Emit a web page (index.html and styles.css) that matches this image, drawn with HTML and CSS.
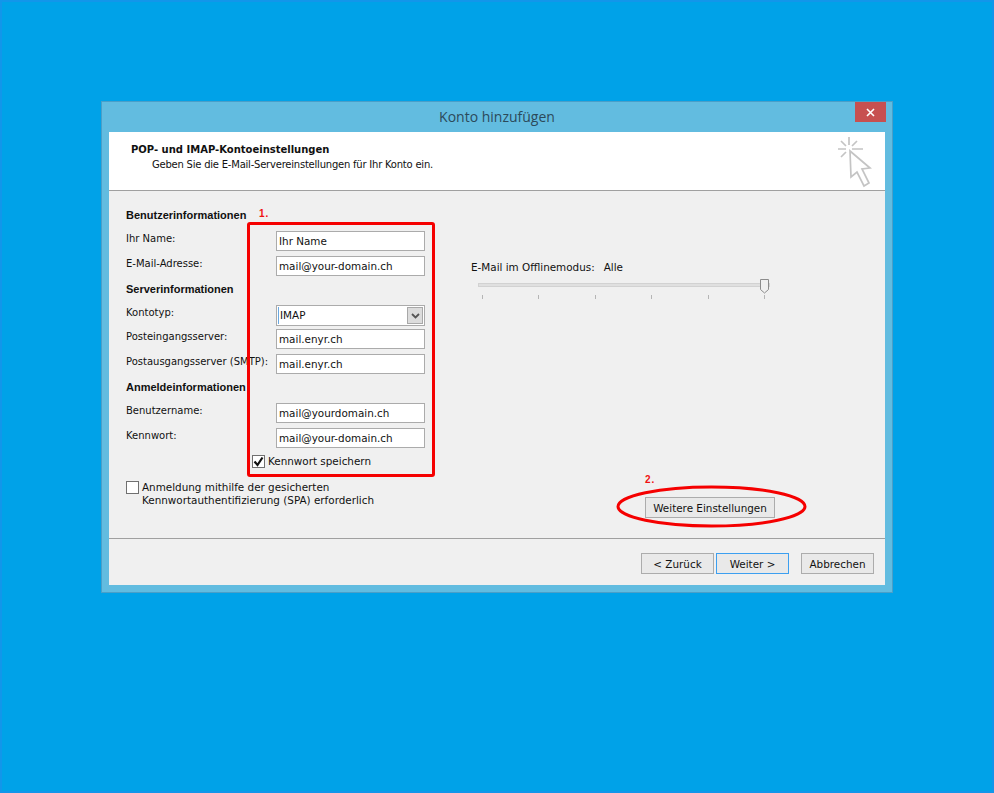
FILE: index.html
```html
<!DOCTYPE html>
<html lang="de">
<head>
<meta charset="utf-8">
<title>Konto hinzufügen</title>
<link rel="stylesheet" href="styles.css">
</head>
<body>
<div class="desktop">
  <div class="window">
    <div class="titlebar">
      <div class="title">Konto hinzufügen</div>
      <div class="close"><svg width="9" height="9" viewBox="0 0 9 9"><path d="M1 1l7 7M8 1l-7 7" stroke="#fff" stroke-width="1.600" fill="none"/></svg></div>
    </div>
    <div class="client">
      <header class="head">
        <div class="head-text">
          <div class="head-title">POP- und IMAP-Kontoeinstellungen</div>
          <div class="head-sub">Geben Sie die E-Mail-Servereinstellungen für Ihr Konto ein.</div>
        </div>
        <svg class="wizard" width="36" height="52" viewBox="0 0 36 52">
          <path d="M13 0v8M2 12h8M16 12h11M5 4l5 5M21 4l-5 5M5 20l5-5" stroke="#c4c4c4" stroke-width="1.700" fill="none"/>
          <path d="M14 14L34 31L26 32L33 46L28 49L21 35L15 40Z" fill="#fff" stroke="#c4c4c4" stroke-width="1.700" stroke-linejoin="miter"/>
        </svg>
      </header>
      <main class="content">
        <div class="form">
          <div class="section">Benutzerinformationen</div>
          <div class="row first"><label class="label">Ihr Name:</label><div class="field">Ihr Name</div></div>
          <div class="row"><label class="label">E-Mail-Adresse:</label><div class="field">mail@your-domain.ch</div></div>
          <div class="section">Serverinformationen</div>
          <div class="row first"><label class="label">Kontotyp:</label>
            <div class="field combo"><span class="combo-text">IMAP</span><span class="combo-btn"><svg width="9" height="6" viewBox="0 0 9 6"><path d="M1 1l3.500 3.500L8 1" stroke="#555" stroke-width="1.800" fill="none"/></svg></span></div>
          </div>
          <div class="row tight"><label class="label">Posteingangsserver:</label><div class="field">mail.enyr.ch</div></div>
          <div class="row"><label class="label">Postausgangsserver (SMTP):</label><div class="field">mail.enyr.ch</div></div>
          <div class="section">Anmeldeinformationen</div>
          <div class="row first"><label class="label">Benutzername:</label><div class="field">mail@yourdomain.ch</div></div>
          <div class="row"><label class="label">Kennwort:</label><div class="field">mail@your-domain.ch</div></div>
          <div class="save"><span class="check"><svg width="11" height="11" viewBox="0 0 11 11"><path d="M1.500 5.500L4.500 9L9.500 1.500" stroke="#111" stroke-width="2.200" fill="none"/></svg></span><span>Kennwort speichern</span></div>
          <div class="spa"><span class="check"></span><span>Anmeldung mithilfe der gesicherten<br>Kennwortauthentifizierung (SPA) erforderlich</span></div>
        </div>
        <div class="side">
          <div class="offline"><span>E-Mail im Offlinemodus:</span><span>Alle</span></div>
          <div class="slider">
            <div class="track"></div>
            <svg class="thumb" width="10" height="15" viewBox="0 0 10 15"><path d="M.5.500h8v10l-4 3.500-4-3.500z" fill="#f0f0f0" stroke="#8c8c8c"/></svg>
            <div class="ticks"><i></i><i></i><i></i><i></i><i></i><i></i></div>
          </div>
          <button class="btn more">Weitere Einstellungen</button>
        </div>
      </main>
      <footer class="foot">
        <button class="btn">&lt; Zurück</button>
        <button class="btn primary">Weiter &gt;</button>
        <button class="btn cancel">Abbrechen</button>
      </footer>
    </div>
    <div class="note box"></div>
    <div class="note n1">1.</div>
    <div class="note n2">2.</div>
    <svg class="note oval" width="191" height="43" viewBox="0 0 191 43"><ellipse cx="95.500" cy="21.500" rx="93.500" ry="19.500" fill="none" stroke="#f50000" stroke-width="3"/></svg>
  </div>
</div>
</body>
</html>
```
FILE: styles.css
```css
* { box-sizing: border-box; }
html, body { margin: 0; padding: 0; }
body { font-family: "DejaVu Sans", sans-serif; font-size: 10px; color: #111; }
.desktop {
  width: 994px; height: 793px; padding: 99px 0 0 99px;
  background: #00a2e8; border: 2px solid #1296ea; overflow: hidden;
}
.window {
  position: relative; width: 792px; height: 492px;
  background: #62bce0; border: 1px solid #4a9fc8;
  padding: 0 7px 7px 7px; display: flex; flex-direction: column;
}
.titlebar { height: 30px; flex: none; display: flex; justify-content: center; position: relative; }
.title { font-family: "Open Sans", sans-serif; font-size: 14px; line-height: 30px; color: #2c4a5a; }
.close {
  position: absolute; right: -1px; top: 0; width: 31px; height: 20px;
  background: #c75050; display: flex; align-items: center; justify-content: center;
}
.client { flex: 1; background: #f0f0f0; display: flex; flex-direction: column; min-height: 0; }
.head {
  height: 59px; flex: none; background: #fff; border-bottom: 1px solid #a0a0a0;
  display: flex; justify-content: space-between; padding: 5px 13px 0 22px;
}
.head-text { padding-top: 5px; }
.head-title { font-weight: bold; line-height: 15px; }
.head-sub { line-height: 15px; padding-left: 21px; letter-spacing: -0.220px; }
.content { height: 348px; flex: none; display: flex; border-bottom: 1px solid #a0a0a0; padding-left: 17px; }
.form { width: 345px; padding-top: 16px; }
.section { font-family: "Liberation Sans", sans-serif; font-size: 11px; font-weight: bold; height: 16px; line-height: 16px; margin-top: 5px; white-space: nowrap; }
.section:first-child { margin-top: 0; }
.row { display: flex; height: 20px; margin-top: 5px; }
.row.first { margin-top: 8px; }
.row.tight { margin-top: 3px; }
.label { width: 150px; flex: none; line-height: 16px; white-space: nowrap; }
.field {
  width: 149px; height: 20px; background: #fff; border: 1px solid #ababab;
  line-height: 19px; padding-left: 2px; font-size: 10.400px; white-space: nowrap;
}
.combo { height: 21px; display: flex; justify-content: space-between; padding: 1px; line-height: 17px; }
.combo-text { padding-left: 1px; border-left: 1px solid #6aa8e0; height: 17px; }
.combo-btn {
  width: 16px; height: 17px; background: #dcdcdc; border: 1px solid #a8a8a8;
  display: flex; align-items: center; justify-content: center;
}
.row:has(.combo) { height: 21px; }
.save { display: flex; align-items: center; gap: 3px; margin: 7px 0 0 126px; height: 12px; font-size: 10.400px; }
.check {
  width: 13px; height: 13px; flex: none; background: #fff; border: 1px solid #707070;
  display: flex; align-items: center; justify-content: center;
}
.spa { display: flex; gap: 3px; margin-top: 14px; line-height: 13px; white-space: nowrap; font-size: 10.400px; }
.side { position: relative; flex: 1; padding: 69px 0 0 0; display: flex; flex-direction: column; }
.offline { display: flex; gap: 9px; line-height: 14px; font-size: 10.400px; }
.slider { position: relative; width: 300px; margin: 5px 0 0 7px; height: 22px; }
.track { position: absolute; left: 0; right: 8px; top: 4px; height: 4px; background: #e0e0e0; border: 1px solid #d2d2d2; }
.thumb { position: absolute; left: 282px; top: 0; }
.ticks { display: flex; justify-content: space-between; width: 283px; margin-left: 4px; padding-top: 16px; }
.ticks i { width: 1px; height: 4px; background: #b5b5b5; display: block; }
.btn {
  width: 73px; height: 21px; padding: 0; font: 10.400px "DejaVu Sans", sans-serif; color: #111;
  background: #e9e9e9; border: 1px solid #acacac; border-radius: 0;
}
.btn.primary { border-color: #3c9ff0; margin-left: 2px; }
.btn.cancel { margin-left: 12px; }
.more { width: 130px; margin: 196px 0 0 174px; flex: none; }
.foot { flex: 1; display: flex; padding: 14px 0 0 532px; }
.note { position: absolute; }
.box { left: 145px; top: 120px; width: 188px; height: 255px; border: 3px solid #f50000; border-radius: 3px; }
.n1, .n2 { font-family: "Liberation Sans", sans-serif; color: #f01010; font-weight: bold; font-size: 10px; line-height: 12px; letter-spacing: 1px; }
.n1 { left: 157px; top: 106px; }
.n2 { left: 543px; top: 372px; }
.oval { left: 514px; top: 383px; }
```
